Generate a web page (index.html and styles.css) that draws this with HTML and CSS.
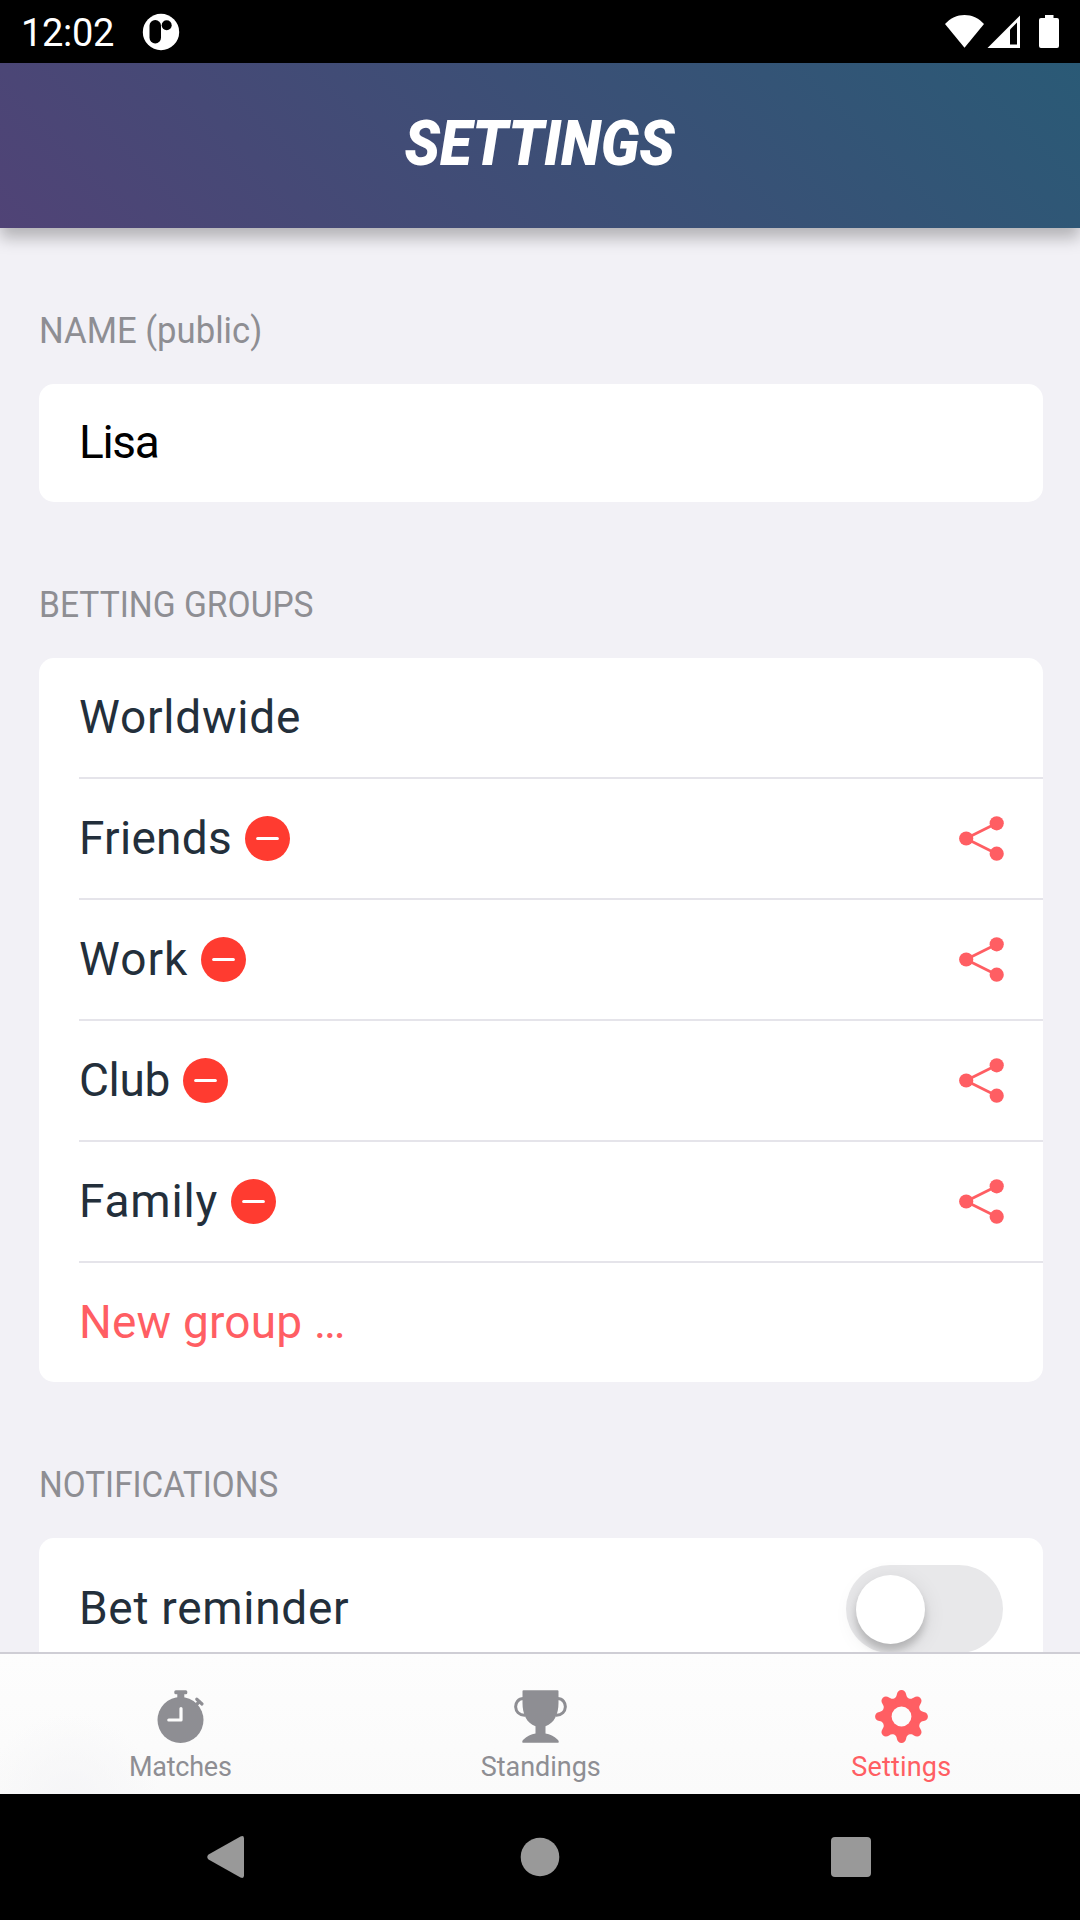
FILE: index.html
```
<!DOCTYPE html>
<html lang="en">
<head>
<meta charset="utf-8">
<title>Settings</title>
<link rel="stylesheet" href="styles.css">
</head>
<body>
<svg class="defs" aria-hidden="true">
  <symbol id="minus" viewBox="0 0 45 45">
    <circle cx="22.5" cy="22.5" r="22.5" fill="#ff3b30"/>
    <path d="M12.6 22.5h19.8" stroke="#fff" stroke-width="3" stroke-linecap="round"/>
  </symbol>
  <symbol id="share" viewBox="0 0 45 45">
    <path d="M37.6 7.2 7 22.5l30.6 15.3" fill="none" stroke="#ff5e63" stroke-width="2.8"/>
    <g fill="#ff5e63"><circle cx="7.2" cy="22.5" r="7.1"/><circle cx="37.7" cy="7.3" r="7.1"/><circle cx="37.7" cy="37.7" r="7.1"/></g>
  </symbol>
</svg>
<div class="app">
  <div class="status">
    <span class="time">12:02</span>
    <svg class="app-dot" width="38" height="38" viewBox="0 0 38 38">
      <circle cx="19" cy="19" r="18.2" fill="#fff"/>
      <rect x="7.5" y="7" width="11.5" height="23.5" rx="5.7"/>
      <circle cx="24.7" cy="12.3" r="5"/>
    </svg>
    <span class="grow"></span>
    <svg width="115" height="36" viewBox="0 0 115 36" fill="#fff">
      <path d="M0 10C5.5 4 12 1 19.5 1S33.5 4 39 10L19.5 33.7Z"/>
      <path d="M42.5 34 75 1.500V34Z"/>
      <path d="M65 15.5 72 8.500V30.500H65Z" fill="#000"/>
      <path d="M100 1h8.500v3h3.500q2 0 2 2v26q0 2-2 2H96q-2 0-2-2V6q0-2 2-2h4Z"/>
    </svg>
  </div>
  <header class="header"><h1>SETTINGS</h1></header>
  <main class="content">
    <h2 class="t-name">NAME (public)</h2>
    <div class="card"><div class="row first name"><span class="t-lisa">Lisa</span></div></div>

    <h2 class="t-groups">BETTING GROUPS</h2>
    <div class="card">
      <div class="row first"><span class="t-world">Worldwide</span></div>
      <div class="row"><span class="t-friends">Friends</span><svg class="minus"><use href="#minus"/></svg><svg class="share"><use href="#share"/></svg></div>
      <div class="row"><span class="t-work">Work</span><svg class="minus"><use href="#minus"/></svg><svg class="share"><use href="#share"/></svg></div>
      <div class="row"><span class="t-club">Club</span><svg class="minus"><use href="#minus"/></svg><svg class="share"><use href="#share"/></svg></div>
      <div class="row"><span class="t-family">Family</span><svg class="minus"><use href="#minus"/></svg><svg class="share"><use href="#share"/></svg></div>
      <div class="row accent"><span class="t-new">New group <span class="dots">...</span></span></div>
    </div>

    <h2 class="t-notif">NOTIFICATIONS</h2>
    <div class="card">
      <div class="row first reminder"><span class="t-bet">Bet reminder</span><span class="toggle"><i class="knob"></i></span></div>
    </div>
  </main>
  <nav class="tabs">
    <div class="tab">
      <svg width="53" height="53" viewBox="0 0 53 53" fill="#8e8e93">
        <circle cx="26.5" cy="30" r="23"/>
        <rect x="20.3" y="0.3" width="13" height="4" rx="1.5"/>
        <rect x="23.3" y="3" width="7" height="6"/>
        <path d="M42.800 9.200 48 14M45.500 11.500 42 15" stroke="#8e8e93" stroke-width="3.2" stroke-linecap="round"/>
        <path d="M27 18.500V30H14.800" fill="none" stroke="#fcfcfc" stroke-width="3.2" stroke-linecap="round" stroke-linejoin="round"/>
      </svg>
      <span class="t-matches">Matches</span>
    </div>
    <div class="tab">
      <svg width="53" height="53" viewBox="0 0 53 53" fill="#8e8e93">
        <path d="M9.500.300h34q1 0 1 1V13C44.500 24 40.500 33 31.500 36.300V43.500C36 44 40 46.500 43.500 49.500Q45.500 51 44.500 52.700H8.500Q7.500 51 9.500 49.500C13 46.500 17 44 21.500 43.500V36.300C12.500 33 8.500 24 8.500 13V1.300q0-1 1-1Z"/>
        <g fill="none" stroke="#8e8e93" stroke-width="3"><path d="M9.500 8.500C-1.200 8.500-1.200 25.700 11 25.200"/><path d="M43.500 8.500C54.200 8.500 54.200 25.700 42 25.200"/></g>
      </svg>
      <span class="t-standings">Standings</span>
    </div>
    <div class="tab accent">
      <svg width="53" height="53" viewBox="-26.5 -26.5 53 53" fill="#ff5e63">
        <circle r="18.8"/>
        <path id="tooth" d="M0 0-7.500-18.100C-5.500-18.900-5-20.400-4.600-22.200-4.100-24.800-2.500-26.400 0-26.400S4.100-24.800 4.600-22.200C5-20.400 5.500-18.900 7.500-18.100Z"/>
        <use href="#tooth" transform="rotate(45)"/><use href="#tooth" transform="rotate(90)"/><use href="#tooth" transform="rotate(135)"/>
        <use href="#tooth" transform="rotate(180)"/><use href="#tooth" transform="rotate(225)"/><use href="#tooth" transform="rotate(270)"/><use href="#tooth" transform="rotate(315)"/>
        <circle r="9.900" fill="#fcfcfc"/>
      </svg>
      <span class="t-settings">Settings</span>
    </div>
  </nav>
  <div class="navbar">
    <svg width="1080" height="126" viewBox="0 0 1080 126" fill="#999">
      <path d="M208.500 60.500 240.500 42.500Q244 41 244 44.500V81.500Q244 85 240.500 83.500L208.500 65.500Q206 63 208.500 60.500Z"/>
      <circle cx="540" cy="63" r="19.3"/>
      <rect x="831" y="43" width="40" height="40" rx="4"/>
    </svg>
  </div>
</div>
</body>
</html>
```
FILE: styles.css
```
* { box-sizing: border-box; }
body { margin: 0; background: #000; font-family: Roboto, sans-serif; }
svg { display: block; flex: none; }
h1, h2 { margin: 0; }
.defs { display: none; }
.app { display: flex; flex-direction: column; width: 1080px; height: 1920px; overflow: hidden; }

.status { display: flex; align-items: center; height: 63px; padding: 0 20px 0 21px; background: #000; color: #fff; flex: none; }
.time { font-size: 38px; line-height: 44px; padding-top: 3px; letter-spacing: -0.3px; }
.app-dot { margin-left: 27.5px; }
.grow { flex: 1; }

.header { position: relative; z-index: 1; display: flex; align-items: center; justify-content: center; height: 165px; padding-bottom: 4px; flex: none; background: linear-gradient(45deg, #504376, #2a5a76); box-shadow: 0 10px 15px rgba(0, 0, 0, .26); }
h1 { font-size: 62px; line-height: 72px; font-weight: 900; font-style: italic; color: #fff; transform: scaleX(.94); }

.content { flex: 1; min-height: 0; overflow: hidden; padding: 0 37px 0 39px; background: #f2f1f6; }
h2 { margin: 79px 0 31px; padding-top: 2px; font-size: 36.5px; line-height: 44px; font-weight: 400; color: #8e8e93; white-space: nowrap; transform-origin: left; }
.card { background: #fff; border-radius: 15px; }
.row { display: flex; align-items: center; height: 121px; margin-left: 40px; padding-right: 39px; border-top: 2px solid #e5e4ea; font-size: 46px; line-height: 54px; color: #232f3b; white-space: nowrap; }
.row > span:first-child { padding-bottom: 2px; }
.row.first { height: 119px; border-top: 0; }
.row.name { height: 118px; color: #000; }
.row.reminder { height: 142px; padding-right: 40px; }
.row.accent { color: #ff5e63; }
.minus { width: 45px; height: 45px; margin-left: 12.7px; }
.share { width: 45px; height: 45px; margin-left: auto; }

.toggle { display: flex; align-items: center; width: 157px; height: 88px; margin-left: auto; padding-left: 10px; border-radius: 44px; background: #e8e8ea; }
.knob { width: 69px; height: 69px; border-radius: 50%; background: #fff; box-shadow: 0 7px 7px rgba(0, 0, 0, .17), 0 5px 22px rgba(0, 0, 0, .1); }

.tabs { display: grid; grid-template-columns: repeat(3, 360.5px); height: 142px; flex: none; border-top: 2px solid #cfced5; background: radial-gradient(circle at 70px 150px, #f5f5f7, rgba(250, 250, 251, 0) 90px), linear-gradient(#fdfdfd, #fafafa); color: #8e8e93; }
.tab { display: flex; flex-direction: column; align-items: center; gap: 8px; padding-top: 36px; font-size: 27px; line-height: 32px; }
.tab.accent { color: #ff5e63; }
.navbar { height: 126px; flex: none; background: #000; }

.t-name { transform: scaleX(.95); }
.t-groups { transform: scaleX(.92); }
.t-notif { transform: scaleX(.912); }
.t-lisa { letter-spacing: -1.3px; }
.t-world { letter-spacing: 0.78px; }
.t-friends { letter-spacing: 0.27px; }
.t-work { letter-spacing: 1.02px; }
.t-club { letter-spacing: -0.33px; }
.t-family { letter-spacing: 0.82px; }
.t-new { letter-spacing: 0.2px; }
.dots { letter-spacing: -2.2px; }
.t-bet { letter-spacing: 0.7px; }
.t-matches { letter-spacing: -0.24px; }
.t-standings { letter-spacing: -0.04px; }
.t-settings { letter-spacing: 0.19px; }
```
